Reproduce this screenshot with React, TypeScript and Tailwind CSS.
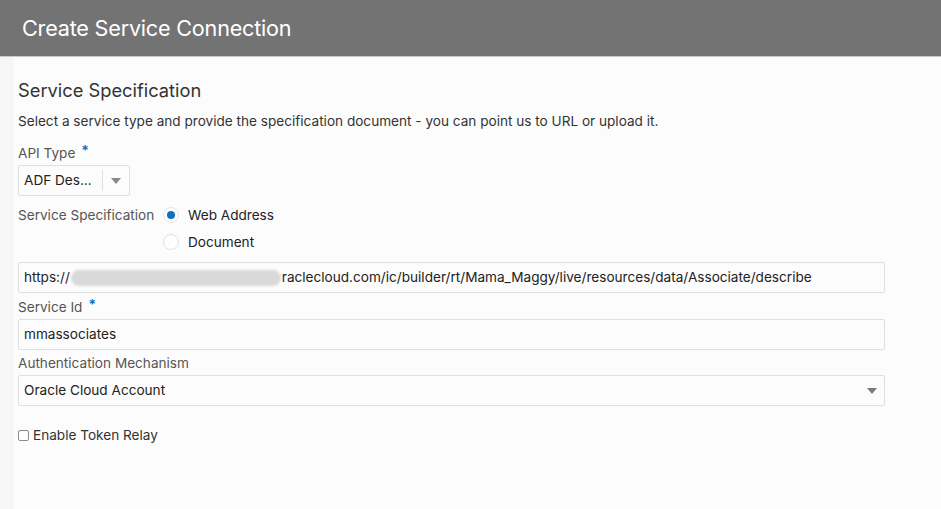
export default function App() {
  return (
    <div className="h-[509px] w-[941px] overflow-hidden bg-[#f6f6f6] font-['Inter','Liberation_Sans',sans-serif] text-[#333]">
      <header className="flex h-[57px] items-center border-b border-[#c9c9c9] bg-[#737373] pl-[22px]">
        <h1 className="text-[21.6px] tracking-[-0.2px] text-white">Create Service Connection</h1>
      </header>

      <main className="ml-[14px] h-full bg-[#fcfcfc] pl-1 pr-[56px] pt-[20px] text-[13.6px]">
        <h2 className="text-[18.3px] leading-[26px] text-[#333]">Service Specification</h2>
        <p className="mt-[9px] leading-[18px] text-[#333]">
          Select a service type and provide the specification document - you can point us to URL or upload it.
        </p>

        <label className="mt-[14px] flex items-start leading-[18px] text-[#555]">
          API Type <span className="relative -top-[3px] ml-[6px] font-bold text-[#0a72c4]">*</span>
        </label>
        <div className="mt-[3px] flex h-[31px] w-[112px] items-center rounded-[2px] border border-[#dfdfdf] bg-[#fcfcfc]">
          <span className="flex-1 pl-[5px] text-[#222]">ADF Des...</span>
          <span className="flex h-[21px] w-[27px] items-center justify-center border-l border-[#dfdfdf]">
            <svg width="10" height="6" viewBox="0 0 10 6">
              <path d="M0 0h10L5 6z" fill="#8a8a8a" />
            </svg>
          </span>
        </div>

        <div className="mt-[10px] flex">
          <span className="w-[145px] leading-[18px] text-[#555]">Service Specification</span>
          <div className="flex flex-col gap-[9px]">
            <div className="flex items-center">
              <span className="flex h-[16px] w-[16px] items-center justify-center rounded-full border border-[#e6e6e6] bg-white">
                <span className="h-[8px] w-[8px] rounded-full bg-[#0a72c4]" />
              </span>
              <span className="ml-[9px] leading-[18px] text-[#222]">Web Address</span>
            </div>
            <div className="flex items-center">
              <span className="h-[16px] w-[16px] rounded-full border border-[#e0e0e0] bg-white" />
              <span className="ml-[9px] leading-[18px] text-[#222]">Document</span>
            </div>
          </div>
        </div>

        <div className="mt-[11px] flex h-[31px] items-center rounded-[2px] border border-[#dfdfdf] bg-[#fcfcfc] pl-[5px] text-[#222]">
          <span>https://</span>
          <span className="mx-[1px] h-[16px] w-[210px] rounded-full bg-[#d9d9d9] blur-[1px]" />
          <span>raclecloud.com/ic/builder/rt/Mama_Maggy/live/resources/data/Associate/describe</span>
        </div>

        <label className="mt-[5px] flex leading-[18px] text-[#555]">
          Service Id <span className="relative -top-[3px] ml-[6px] font-bold text-[#0a72c4]">*</span>
        </label>
        <div className="mt-[3px] flex h-[31px] items-center rounded-[2px] border border-[#dfdfdf] bg-[#fcfcfc] pl-[5px] text-[#222]">
          mmassociates
        </div>

        <label className="mt-[4px] block leading-[18px] text-[#555]">Authentication Mechanism</label>
        <div className="mt-[3px] flex h-[31px] items-center justify-between rounded-[2px] border border-[#dfdfdf] bg-[#fcfcfc] pl-[5px] pr-[7px] text-[#222]">
          <span>Oracle Cloud Account</span>
          <svg width="10" height="6" viewBox="0 0 10 6">
            <path d="M0 0h10L5 6z" fill="#7a7a7a" />
          </svg>
        </div>

        <label className="mt-[20px] flex items-center text-[#333]">
          <span className="h-[11px] w-[11px] rounded-[2px] border border-[#8a8a8a] bg-white" />
          <span className="ml-[4px] leading-[18px]">Enable Token Relay</span>
        </label>
      </main>
    </div>
  );
}
